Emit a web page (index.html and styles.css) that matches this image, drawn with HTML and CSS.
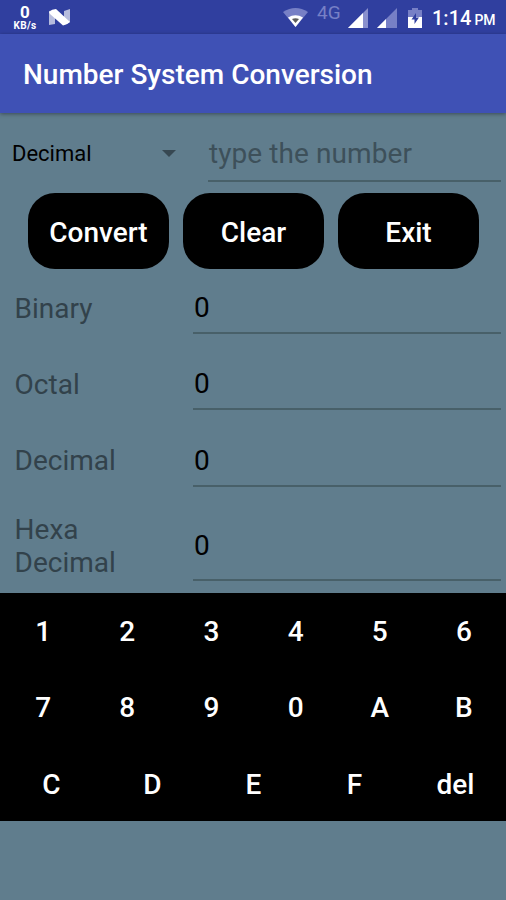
FILE: index.html
```html
<!DOCTYPE html>
<html lang="en">
<head>
<meta charset="utf-8">
<title>Number System Conversion</title>
<link rel="stylesheet" href="styles.css">
</head>
<body>
<div class="status">
  <div class="speed"><span class="rate">0</span><span class="unit">KB/s</span></div>
  <svg class="logo" width="22" height="17" viewBox="0 0 22 17"><path fill="#fff" opacity=".65" d="M0 2 6 1v14l-6 1zM15 2l6-2v13l-6 3z"/><path fill="#fff" d="M0 3Q3 0 7 0L21 13Q18 16 14 16.500L1 5z"/></svg>
  <svg class="wifi" width="26" height="20" viewBox="0 0 26 20"><path fill="#7780c6" d="M0 4Q12.500-4 25 4L12.500 19z"/><path fill="#fff" d="M5 9.500Q12.500 5 20 9.500L12.500 19z"/><path fill="#5d5d5d" d="M9 11Q12.500 9.500 16 11L12.500 15z"/></svg>
  <span class="net">4G</span>
  <svg class="sig1" width="20" height="20" viewBox="0 0 20 20"><path fill="#8990cd" d="M20 0v20H0z"/><path fill="#fff" d="M15 5v15H0z"/></svg>
  <svg class="sig2" width="20" height="20" viewBox="0 0 20 20"><path fill="#7780c6" d="M20 0v20H0z"/><path fill="#fff" d="M9 11v9H0z"/></svg>
  <svg class="battery" width="14" height="20" viewBox="0 0 14 20"><path fill="#7780c6" d="M4 0h6v2h4v8H0V2h4z"/><path fill="#fff" d="M0 9h14v11H0z"/><path fill="#303f9f" d="M8 5 3.500 11.500h3V16l4.500-6.500H8z"/></svg>
  <span class="clock">1:14<small>PM</small></span>
</div>
<header class="appbar"><h1>Number System Conversion</h1></header>
<main>
  <div class="entry">
    <div class="spinner"><span>Decimal</span><i class="arrow"></i></div>
    <div class="field hint">type the number</div>
  </div>
  <div class="actions"><button>Convert</button><button>Clear</button><button>Exit</button></div>
  <div class="results">
    <div class="row"><label>Binary</label><div class="field">0</div></div>
    <div class="row"><label>Octal</label><div class="field">0</div></div>
    <div class="row third"><label>Decimal</label><div class="field">0</div></div>
    <div class="row tall"><label>Hexa Decimal</label><div class="field">0</div></div>
  </div>
  <div class="keypad">
    <div class="keys"><span>1</span><span>2</span><span>3</span><span>4</span><span>5</span><span>6</span></div>
    <div class="keys"><span>7</span><span>8</span><span>9</span><span>0</span><span>A</span><span>B</span></div>
    <div class="keys"><span>C</span><span>D</span><span>E</span><span>F</span><span>del</span></div>
  </div>
</main>
</body>
</html>
```
FILE: styles.css
```css
* { box-sizing: border-box; }
body {
  margin: 0;
  height: 900px;
  overflow: hidden;
  background: #607d8d;
  font: 28px/33px Roboto, sans-serif;
  color: #000;
}
.status {
  display: flex;
  align-items: flex-start;
  height: 34px;
  background: #303f9f;
  color: #fff;
}
.status svg { flex: none; }
.speed {
  display: flex;
  flex-direction: column;
  align-items: center;
  width: 24px;
  margin: 4px 0 0 13px;
}
.rate { font-size: 17px; line-height: 17px; font-weight: 700; }
.unit { font-size: 10px; line-height: 9px; font-weight: 700; letter-spacing: .4px; }
.logo { margin: 9px 0 0 12px; }
.wifi { margin: 8px 0 0 212px; }
.net { width: 26px; margin: 3px 0 0 8px; font-size: 19px; line-height: 20px; color: #7780c6; }
.sig1 { margin: 8px 0 0 5px; }
.sig2 { margin: 8px 0 0 9px; }
.battery { margin: 8px 0 0 11px; }
.clock { margin: 7px 0 0 10px; font-size: 20px; line-height: 22px; font-weight: 500; white-space: nowrap; }
.clock small { margin-left: 3px; font-size: 14px; }
.appbar {
  position: relative;
  height: 79px;
  padding: 24px 23px 0;
  background: #3f51b5;
  box-shadow: 0 1px 4px rgba(0, 0, 0, .4);
}
h1 { margin: 0; font-size: 28px; line-height: 34px; font-weight: 500; color: #fff; white-space: nowrap; }
.entry { display: flex; height: 80px; padding: 0 5px 0 12px; }
.spinner {
  display: flex;
  align-items: center;
  justify-content: space-between;
  width: 164px;
  height: 81px;
  margin-right: 32px;
  font-size: 22px;
}
.arrow { border: 7px solid transparent; border-top-color: #374852; border-bottom: 0; }
.field {
  flex: 1;
  padding-left: 1px;
  border-bottom: 2px solid #486069;
}
.entry .field { height: 69px; padding-top: 24px; }
.hint { color: #3d505a; letter-spacing: .08px; }
.actions { display: flex; justify-content: center; gap: 14px; height: 76px; }
.actions button {
  width: 141px;
  height: 76px;
  padding: 2px 0 0 1px;
  border: 0;
  border-radius: 27px;
  background: #000;
  color: #fff;
  font: 500 28px/33px Roboto, sans-serif;
}
.row { display: flex; height: 76px; padding: 0 5px 0 14px; }
.row label { width: 179px; padding: 23px 50px 0 .6px; color: #32424b; }
.row .field { height: 65px; padding-top: 22px; }
.row.third { height: 77px; }
.row.third .field { height: 66px; padding-top: 23px; }
.row.third label { padding-top: 23px; }
.row.tall { height: 95px; }
.row.tall label { padding-top: 15px; }
.row.tall .field { height: 83px; padding-top: 31px; }
.keypad { height: 228px; background: #000; color: #fff; font-weight: 500; }
.keys { display: flex; height: 76px; padding: 22px 0 0 1px; }
.keys:last-child { padding-top: 23px; }
.keys span { flex: 1 1 0; text-align: center; }
```
